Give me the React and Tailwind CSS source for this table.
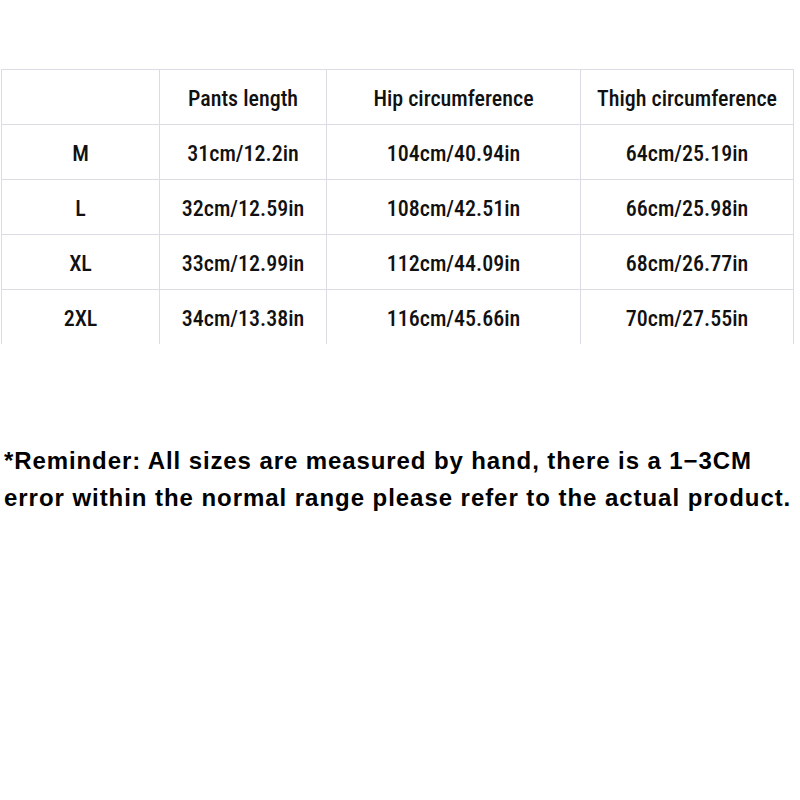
const headers = ['', 'Pants length', 'Hip circumference', 'Thigh circumference']

const rows = [
  ['M', '31cm/12.2in', '104cm/40.94in', '64cm/25.19in'],
  ['L', '32cm/12.59in', '108cm/42.51in', '66cm/25.98in'],
  ['XL', '33cm/12.99in', '112cm/44.09in', '68cm/26.77in'],
  ['2XL', '34cm/13.38in', '116cm/45.66in', '70cm/27.55in'],
]

const Cell = ({ children, last }) => (
  <div
    className={`h-[55px] pt-[3px] flex items-center justify-center border-t border-l border-[#dcdce4] text-[22px] font-medium text-[#111] ${last ? 'border-r' : ''}`}
  >
    {children}
  </div>
)

export default function App() {
  return (
    <div className="w-[800px] h-[800px] bg-white pt-[69px]" style={{ fontFamily: '"Roboto Condensed", "Liberation Sans Narrow", "Liberation Sans", sans-serif' }}>
      <div className="ml-px w-[793px] grid grid-cols-[158px_167px_254px_214px]">
        {[headers, ...rows].map((r, i) =>
          r.map((c, j) => (
            <Cell key={`${i}-${j}`} last={j === 3}>{c}</Cell>
          ))
        )}
      </div>

      <div className="mt-[98px] pl-[4px] text-[24px] leading-[37px] font-bold text-black whitespace-nowrap" style={{ fontFamily: '"Liberation Sans", Arial, sans-serif' }}>
        <p className="tracking-[0.9px]">*Reminder: All sizes are measured by hand, there is a 1−3CM</p>
        <p className="tracking-[0.95px]">error within the normal range please refer to the actual product.</p>
      </div>
    </div>
  )
}
